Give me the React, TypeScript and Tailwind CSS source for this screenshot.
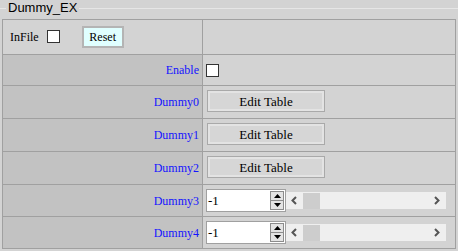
import React from "react";

const serif = { fontFamily: '"Liberation Serif", "Times New Roman", serif' };

function CheckBox() {
  return <div className="w-[13px] h-[13px] bg-white border border-[#333333] shrink-0" />;
}

function EditButton() {
  return (
    <button
      className="w-[118px] h-[22px] border border-[#a9a9a9] bg-[#d6d6d6] shadow-[inset_0_0_0_2px_#e3e3e3] text-[13px] leading-none text-black flex items-center justify-center"
      style={serif}
    >
      Edit Table
    </button>
  );
}

function SpinSlider() {
  return (
    <div className="flex items-center">
      <div className="w-[80px] h-[23px] bg-white border border-[#a0a0a0] flex items-center pl-[1px] pr-[1px]">
        <span className="flex-1 text-[13px] leading-none text-black" style={serif}>-1</span>
        <div className="w-[14px] h-[19px] flex flex-col border border-[#8c8c8c] bg-[#e4e4e4]">
          <div className="flex-1 flex items-center justify-center border-b border-[#8c8c8c]">
            <svg width="7" height="4" viewBox="0 0 7 4"><path d="M0 4 L3.5 0 L7 4 Z" fill="#000" /></svg>
          </div>
          <div className="flex-1 flex items-center justify-center">
            <svg width="7" height="4" viewBox="0 0 7 4"><path d="M0 0 L3.5 4 L7 0 Z" fill="#000" /></svg>
          </div>
        </div>
      </div>
      <div className="w-[160px] h-[17px] bg-[#efefef] flex items-center">
        <svg className="ml-[5px]" width="6" height="9" viewBox="0 0 6 9">
          <path d="M5 1 L1.5 4.5 L5 8" stroke="#555" strokeWidth="2" fill="none" />
        </svg>
        <div className="ml-[6px] w-[17px] h-[16px] bg-[#cdcdcd]" />
        <div className="flex-1" />
        <svg className="mr-[6px]" width="6" height="9" viewBox="0 0 6 9">
          <path d="M1 1 L4.5 4.5 L1 8" stroke="#555" strokeWidth="2" fill="none" />
        </svg>
      </div>
    </div>
  );
}

function Row({ label, h, last, children }: { label: string; h: string; last?: boolean; children: React.ReactNode }) {
  return (
    <div className={`flex ${h} ${last ? "" : "border-b border-[#a0a0a0]"}`}>
      <div
        className="w-[200px] bg-[#c2c2c2] border-r border-[#a0a0a0] flex items-center justify-end pr-[3px] text-[12px] text-[#1414ff]"
        style={serif}
      >
        {label}
      </div>
      <div className="flex-1 flex items-center pl-[3px]">{children}</div>
    </div>
  );
}

export default function App() {
  return (
    <div className="w-[458px] h-[251px] bg-[#d3d3d3] overflow-hidden">
      {/* legend */}
      <div className="flex items-center h-[16px] mb-[3px]">
        <div className="w-[6px] h-px bg-[#e6e6e6]" />
        <span
          className="px-[2px] text-[13px] leading-[16px] text-black"
          style={{ fontFamily: '"Liberation Sans", Arial, sans-serif' }}
        >
          Dummy_EX
        </span>
        <div className="flex-1 h-px bg-[#e6e6e6]" />
      </div>

      <div className="ml-[2px] w-[454px] border border-[#a0a0a0]">
        <div className="flex h-[35px] border-b border-[#a0a0a0]">
          <div className="w-[200px] border-r border-[#a0a0a0] flex items-center pl-[7px]">
            <span className="text-[12px] text-black" style={serif}>InFile</span>
            <div className="ml-[8px] -mt-[1px]">
              <CheckBox />
            </div>
            <button
              className="ml-[22px] w-[42px] h-[22px] border-2 border-[#b4b4b4] bg-[#e0ffff] text-[12px] leading-none text-black flex items-center justify-center"
              style={serif}
            >
              Reset
            </button>
          </div>
          <div className="flex-1" />
        </div>
        <Row label="Enable" h="h-[31px]">
          <CheckBox />
        </Row>
        <Row label="Dummy0" h="h-[33px]">
          <div className="ml-[1px] -mt-[2px]"><EditButton /></div>
        </Row>
        <Row label="Dummy1" h="h-[33px]">
          <div className="ml-[1px] -mt-[2px]"><EditButton /></div>
        </Row>
        <Row label="Dummy2" h="h-[33px]">
          <div className="ml-[1px] -mt-[2px]"><EditButton /></div>
        </Row>
        <Row label="Dummy3" h="h-[32px]">
          <SpinSlider />
        </Row>
        <Row label="Dummy4" h="h-[31px]" last>
          <SpinSlider />
        </Row>
      </div>
    </div>
  );
}
